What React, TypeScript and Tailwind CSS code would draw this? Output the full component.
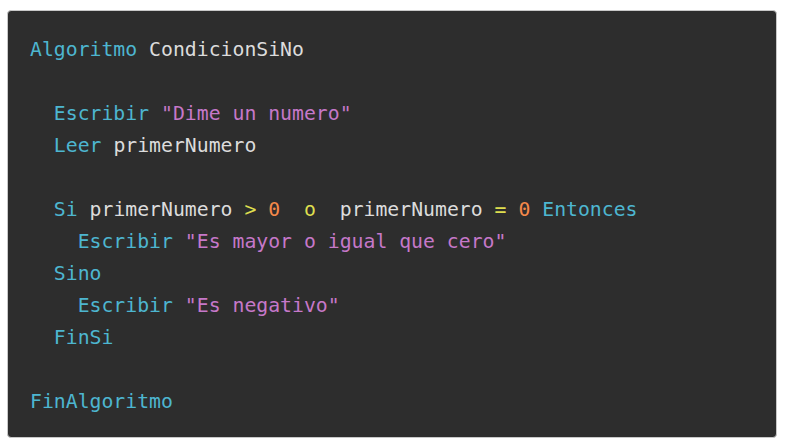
import React from "react";

type Tok = [string, string];

const K = "text-[#4db6d0]";
const I = "text-[#dcdcdc]";
const S = "text-[#c678c9]";
const N = "text-[#f5894a]";
const O = "text-[#dede4f]";

const lines: Tok[][] = [
  [["Algoritmo", K], [" ", I], ["CondicionSiNo", I]],
  [],
  [["  ", I], ["Escribir", K], [" ", I], ['"Dime un numero"', S]],
  [["  ", I], ["Leer", K], [" ", I], ["primerNumero", I]],
  [],
  [
    ["  ", I],
    ["Si", K],
    [" primerNumero ", I],
    [">", O],
    [" ", I],
    ["0", N],
    ["  ", I],
    ["o", O],
    ["  primerNumero ", I],
    ["=", O],
    [" ", I],
    ["0", N],
    [" ", I],
    ["Entonces", K],
  ],
  [["    ", I], ["Escribir", K], [" ", I], ['"Es mayor o igual que cero"', S]],
  [["  ", I], ["Sino", K]],
  [["    ", I], ["Escribir", K], [" ", I], ['"Es negativo"', S]],
  [["  ", I], ["FinSi", K]],
  [],
  [["FinAlgoritmo", K]],
];

export default function App() {
  return (
    <div className="w-[788px] h-[447px] bg-white pt-[10px] pl-[7px]">
      <div className="w-[770px] h-[428px] bg-[#2d2d2d] border border-[#c8c8c8] rounded-[4px] pt-[23px] pl-[22px]">
        <pre
          className="m-0 text-[19.8px] leading-[32px] whitespace-pre"
          style={{ fontFamily: '"DejaVu Sans Mono", monospace' }}
        >
          {lines.map((l, i) => (
            <div key={i} className="h-[32px]">
              {l.map(([t, c], j) => (
                <span key={j} className={c}>
                  {t}
                </span>
              ))}
            </div>
          ))}
        </pre>
      </div>
    </div>
  );
}
